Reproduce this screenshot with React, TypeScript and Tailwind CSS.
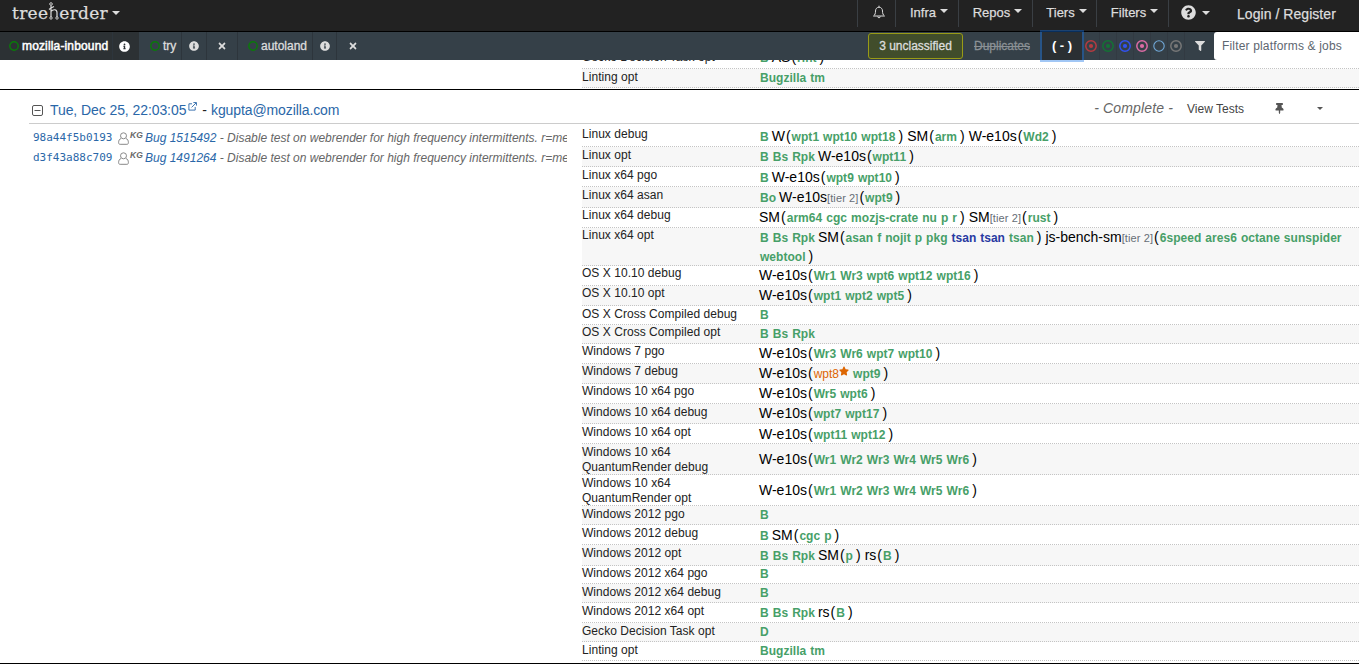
import { FaInfoCircle, FaTimes, FaFilter, FaQuestionCircle, FaThumbtack, FaStar } from "react-icons/fa";

type Group = { name: string; tier?: boolean; jobs: string[] };
type Item = string | Group;
type Row = { platform: string; height: string; top?: string; jobsTop?: string; jobs: Item[] };

const g = (name: string, jobs: string, tier = false): Group => ({ name, tier, jobs: jobs.split(" ") });

const rows: Row[] = [
  { platform: "Linux debug", height: "h-[23px]", top: "pt-[3px]", jobsTop: "pt-[3px]", jobs: ["B", g("W", "wpt1 wpt10 wpt18"), g("SM", "arm"), g("W-e10s", "Wd2")] },
  { platform: "Linux opt", height: "h-[20px]", top: "pt-px", jobs: ["B", "Bs", "Rpk", g("W-e10s", "wpt11")] },
  { platform: "Linux x64 pgo", height: "h-[20px]", top: "pt-px", jobsTop: "pt-px", jobs: ["B", g("W-e10s", "wpt9 wpt10")] },
  { platform: "Linux x64 asan", height: "h-[21px]", top: "pt-px", jobsTop: "pt-px", jobs: ["Bo", g("W-e10s", "wpt9", true)] },
  { platform: "Linux x64 debug", height: "h-[20px]", jobs: [g("SM", "arm64 cgc mozjs-crate nu p r"), g("SM", "rust", true)] },
  { platform: "Linux x64 opt", height: "h-[38px]", jobs: ["B", "Bs", "Rpk", g("SM", "asan f nojit p pkg *tsan *tsan tsan"), g("js-bench-sm", "6speed ares6 octane sunspider webtool", true)] },
  { platform: "OS X 10.10 debug", height: "h-[20px]", jobs: [g("W-e10s", "Wr1 Wr3 wpt6 wpt12 wpt16")] },
  { platform: "OS X 10.10 opt", height: "h-[20px]", jobs: [g("W-e10s", "wpt1 wpt2 wpt5")] },
  { platform: "OS X Cross Compiled debug", height: "h-[19px]", top: "pt-px", jobsTop: "-mt-px", jobs: ["B"] },
  { platform: "OS X Cross Compiled opt", height: "h-[19px]", jobsTop: "-mt-px", jobs: ["B", "Bs", "Rpk"] },
  { platform: "Windows 7 pgo", height: "h-[20px]", jobs: [g("W-e10s", "Wr3 Wr6 wpt7 wpt10")] },
  { platform: "Windows 7 debug", height: "h-[20px]", jobs: [g("W-e10s", "!wpt8 wpt9")] },
  { platform: "Windows 10 x64 pgo", height: "h-[20px]", jobs: [g("W-e10s", "Wr5 wpt6")] },
  { platform: "Windows 10 x64 debug", height: "h-[20px]", top: "pt-px", jobs: [g("W-e10s", "wpt7 wpt17")] },
  { platform: "Windows 10 x64 opt", height: "h-[20px]", top: "pt-px", jobsTop: "pt-px", jobs: [g("W-e10s", "wpt11 wpt12")] },
  { platform: "Windows 10 x64 QuantumRender debug", height: "h-[31px]", top: "pt-px", jobsTop: "pt-[6px]", jobs: [g("W-e10s", "Wr1 Wr2 Wr3 Wr4 Wr5 Wr6")] },
  { platform: "Windows 10 x64 QuantumRender opt", height: "h-[31px]", top: "pt-px", jobsTop: "pt-[6px]", jobs: [g("W-e10s", "Wr1 Wr2 Wr3 Wr4 Wr5 Wr6")] },
  { platform: "Windows 2012 pgo", height: "h-[19px]", top: "pt-px", jobsTop: "-mt-px", jobs: ["B"] },
  { platform: "Windows 2012 debug", height: "h-[20px]", top: "pt-px", jobsTop: "pt-px", jobs: ["B", g("SM", "cgc p")] },
  { platform: "Windows 2012 opt", height: "h-[21px]", top: "pt-px", jobsTop: "pt-px", jobs: ["B", "Bs", "Rpk", g("SM", "p"), g("rs", "B")] },
  { platform: "Windows 2012 x64 pgo", height: "h-[18px]", jobsTop: "-mt-[2px]", jobs: ["B"] },
  { platform: "Windows 2012 x64 debug", height: "h-[19px]", top: "pt-px", jobsTop: "-mt-px", jobs: ["B"] },
  { platform: "Windows 2012 x64 opt", height: "h-[20px]", top: "pt-px", jobs: ["B", "Bs", "Rpk", g("rs", "B")] },
  { platform: "Gecko Decision Task opt", height: "h-[19px]", top: "pt-px", jobsTop: "-mt-px", jobs: ["D"] },
  { platform: "Linting opt", height: "h-[19px]", top: "pt-px", jobsTop: "-mt-px", jobs: ["Bugzilla", "tm"] },
];

function Caret({ className = "" }: { className?: string }) {
  return (
    <svg viewBox="0 0 8 4" className={`h-1 w-2 shrink-0 ${className}`}>
      <path d="M0 0h8L4 4z" fill="currentColor" />
    </svg>
  );
}

function JobLabel({ job }: { job: string }) {
  if (job[0] === "!")
    return (
      <span className="mr-[3px] ml-px inline-block text-[12px] text-[#dd6602]">
        {job.slice(1)}
        <FaStar className="inline size-[10px] -translate-y-[4px]" />
      </span>
    );
  if (job[0] === "*") return <span className="mr-[3px] ml-px inline-block text-[12px] font-bold text-[#283aa2]">{job.slice(1)}</span>;
  return <span className="mr-[3px] ml-px inline-block text-[12px] font-bold tracking-[0.04px] text-[#479f68]">{job}</span>;
}

function PlatformRow({ row, shaded }: { row: Row; shaded: boolean }) {
  return (
    <div className={`flex shrink-0 border-b border-dotted border-[#c4c4c4] ${row.height} ${shaded ? "bg-[#f7f7f7]" : ""}`}>
      <div className={`w-[177px] shrink-0 pr-8 text-[12px] leading-[15px] tracking-[0.04px] text-[#222] ${row.top ?? ""}`}>
        <span className={row.platform.includes("Quantum") ? "" : "whitespace-nowrap"}>{row.platform}</span>
      </div>
      <div className={`min-w-0 flex-1 pr-3 text-[14px] leading-[18px] text-black ${row.jobsTop ?? ""}`}>
        {row.jobs.map((item, i) =>
          typeof item === "string" ? (
            <JobLabel key={i} job={item} />
          ) : (
            <span key={i} className="mr-[4px]">
              {item.name}
              {item.tier && <span className="text-[11px] tracking-[0.1px] text-[#666e76]">[tier 2]</span>}
              <span className="ml-px">(</span>
              {item.jobs.map((job, j) => (
                <span key={j}>
                  <JobLabel job={job} />
                  {j < item.jobs.length - 1 && <wbr />}
                </span>
              ))}
              <span>)</span>
            </span>
          ),
        )}
      </div>
    </div>
  );
}

function Ring({ className, dot = true }: { className: string; dot?: boolean }) {
  return (
    <span className="flex h-full w-[17px] items-center justify-center border-r border-[#323a42]">
      <svg viewBox="0 0 12 12" className={`size-3 shrink-0 ${className}`}>
        <circle cx="6" cy="6" r="5.2" fill="none" stroke="currentColor" strokeWidth={dot ? 1.5 : 1.1} />
        {dot && <circle cx="6" cy="6" r="2.1" fill="currentColor" />}
      </svg>
    </span>
  );
}

function Person() {
  return (
    <svg viewBox="0 0 11 13" className="h-[13px] w-[11px] shrink-0" fill="none" stroke="#888">
      <circle cx="5.5" cy="3.8" r="3" />
      <path d="M3 6.6C1.3 7 .6 8.5.6 10.700c0 1.100.6 1.600 1.500 1.600h6.800c.900 0 1.500-.500 1.500-1.600 0-2.200-.700-3.700-2.400-4.100" />
    </svg>
  );
}

function RepoName({ name, className }: { name: string; className: string }) {
  return (
    <span className={`flex h-full shrink-0 items-center border-r border-[#2d353c] text-[12px] whitespace-nowrap ${className}`}>
      <svg viewBox="0 0 10 10" className="mr-[3px] size-[10px] shrink-0">
        <circle cx="5" cy="5" r="4.2" fill="none" stroke="#0a7a0a" strokeWidth="1.4" />
      </svg>
      {name}
    </span>
  );
}

function Revision({ hash, bug }: { hash: string; bug: string }) {
  return (
    <div className="flex h-5 items-center whitespace-nowrap">
      <span className="w-[85px] shrink-0 font-['DejaVu_Sans_Mono',monospace] text-[11px] text-[#2a67a8]">{hash}</span>
      <Person />
      <b className="ml-px w-[13px] shrink-0 -translate-y-[3px] text-[8.5px] italic text-[#666]">KG</b>
      <span className="ml-[2px] shrink-0 text-[12px] italic text-[#666]">
        <span className="text-[#2a67a8]">Bug {bug}</span> - Disable test on webrender for high frequency intermittents. r=me
      </span>
    </div>
  );
}

function Logo() {
  return (
    <span className="flex items-center font-['DejaVu_Serif',serif] text-[17px] leading-[24px]">
      <span className="tracking-[0.3px]">tree</span>
      <svg viewBox="0 0 11 18" className="-mt-[5px] h-[18px] w-[11px]" fill="none" stroke="currentColor" role="img" aria-label="h">
        <path d="M3 3.500v11.500M3 9.500C5 7 9 7 9 10.500V15M1 7.500l2-1.500 3-1.500" strokeWidth="1.200" />
        <circle cx="3" cy="2" r="1.300" strokeWidth=".9" />
        <circle cx="3" cy="16" r="1.200" strokeWidth=".9" />
        <circle cx="9" cy="16" r="1.200" strokeWidth=".9" />
      </svg>
      <span className="tracking-[0.3px]">erder</span>
    </span>
  );
}

const menus = [
  { label: "Infra", width: "w-[63px]" },
  { label: "Repos", width: "w-[74px]" },
  { label: "Tiers", width: "w-[64px]" },
  { label: "Filters", width: "w-[72px]" },
];

export default function App() {
  return (
    <div className="flex h-[665px] w-[1359px] flex-col overflow-hidden bg-white font-['Liberation_Sans',Arial,sans-serif]">
      <header className="flex h-[32px] shrink-0 items-start border-b border-black bg-[#222] text-[#ddd] [-webkit-text-stroke:0.25px]">
        <div className="flex w-[857px] items-center pt-px pl-3">
          <Logo />
          <Caret className="ml-1" />
        </div>
        <div className="flex h-[27px] w-[39px] items-center justify-center border-x border-[#3a3f44] pl-[4px]">
          <svg viewBox="0 0 14 14" className="mt-[-3px] size-[14px]" fill="none" stroke="currentColor">
            <path d="M1.500 11c1.500-1 2-2.700 2-5 0-2.200 1.500-3.800 3.500-3.800s3.500 1.600 3.500 3.800c0 2.300.500 4 2 5zM7 2.200V.7M5.700 11.500c0 1.700 2.600 1.700 2.600 0" />
          </svg>
        </div>
        {menus.map((m) => (
          <div key={m.label} className={`flex h-[27px] items-center justify-center border-r border-[#3a3f44] pb-[2px] pl-[4px] text-[13px] ${m.width}`}>
            {m.label}
            <Caret className="mt-[-3px] ml-1" />
          </div>
        ))}
        <div className="flex h-[25px] w-[57px] items-center pl-3">
          <FaQuestionCircle className="size-[15px]" />
          <Caret className="ml-[6px]" />
        </div>
        <span className="pt-[5px] pl-[11px] text-[14px] leading-[18px] tracking-[0.05px]">Login / Register</span>
      </header>

      <nav className="relative z-10 flex h-[28px] shrink-0 items-center bg-[#354048] text-[#ddd]">
        <RepoName name="mozilla-inbound" className="w-[113px] bg-[#2c3134] pl-[9px] tracking-[0.15px] text-white [-webkit-text-stroke:0.5px]" />
        <span className="flex h-full w-[26px] items-center bg-[#2c3134] pl-[6px] text-white"><FaInfoCircle className="size-[11px]" /></span>
        <RepoName name="try" className="w-[43px] pl-[11px] [-webkit-text-stroke:0.3px]" />
        <span className="flex h-full w-[25px] items-center justify-center border-r border-[#2d353c]"><FaInfoCircle className="size-[10px]" /></span>
        <span className="flex h-full w-[31px] items-center justify-center border-r border-[#2d353c]"><FaTimes className="size-[10px]" /></span>
        <RepoName name="autoland" className="w-[75px] pl-[10px] [-webkit-text-stroke:0.3px]" />
        <span className="flex h-full w-[24px] items-center justify-center border-r border-[#2d353c]"><FaInfoCircle className="size-[10px]" /></span>
        <span className="flex w-[31px] justify-center"><FaTimes className="size-[10px]" /></span>
        <span className="ml-[500px] flex h-[26px] w-[95px] items-center justify-center rounded-[3px] border border-[#999b16] bg-[#414d2b] text-[12px] [-webkit-text-stroke:0.3px]">3 unclassified</span>
        <span className="ml-[11px] w-[57px] text-[12px] whitespace-nowrap text-[#8a9095] line-through [-webkit-text-stroke:0.3px]">Duplicates</span>
        <span className="ml-[11px] flex h-[28px] w-[40px] items-center justify-center bg-[#2a2f33] text-[13px] font-bold text-white outline-2 outline-[rgba(20,115,230,0.4)]">( - )</span>
        <div className="ml-px flex h-full">
          <Ring className="text-[#b63a40]" />
          <Ring className="text-[#137334]" />
          <Ring className="text-[#3152f2]" />
          <Ring className="text-[#dc6ba5]" />
          <Ring className="text-[#71a8d8]" dot={false} />
          <Ring className="text-[#777]" />
        </div>
        <span className="flex w-[29px] justify-center"><FaFilter className="size-[10px]" /></span>
        <span className="flex h-[28px] flex-1 items-center rounded-l-[3px] bg-white pl-[8px] text-[12px] tracking-[0.17px] text-[#5d6670]">Filter platforms &amp; jobs</span>
      </nav>

      <section className="flex h-[30px] shrink-0 flex-col justify-end overflow-hidden border-b border-black pb-px pl-[582px]">
        <PlatformRow row={{ platform: "Gecko Decision Task opt", height: "h-[20px]", top: "pt-px", jobsTop: "-mt-px", jobs: ["B", g("AS", "rlnt")] }} shaded={false} />
        <PlatformRow row={{ platform: "Linting opt", height: "h-[19px]", top: "pt-px", jobsTop: "-mt-px", jobs: ["Bugzilla", "tm"] }} shaded />
      </section>

      <div className="ml-[29px] flex h-[34px] shrink-0 items-center border-b border-[#ccc] pt-[7px] text-[14px] text-[#222]">
        <svg viewBox="0 0 11 11" className="ml-[3px] size-[11px]" fill="none" stroke="#555"><rect x=".5" y=".5" width="10" height="10" rx="1.5" /><path d="M2.500 5.500h6" /></svg>
        <span className="ml-[7px] tracking-[-0.08px] text-[#2a67a8]">Tue, Dec 25, 22:03:05</span>
        <svg viewBox="0 0 10 10" className="ml-[2px] size-[9px] -translate-y-1 text-[#2a67a8]" fill="none" stroke="currentColor">
          <path d="M4.500 2H1v7h7V5.500M4 6l5-5M6 .6h3.400V4" />
        </svg>
        <span className="mr-[4px] ml-[5px]">-</span>
        <span className="tracking-[-0.1px] text-[#2a67a8]">kgupta@mozilla.com</span>
        <div className="ml-auto flex items-center pb-[3px]">
          <span className="text-[14px] tracking-[0.15px] italic text-[#666]">- Complete -</span>
          <span className="ml-[14px] text-[12px] text-[#444]">View Tests</span>
          <FaThumbtack className="ml-[30px] size-[11px] text-[#555]" />
          <svg viewBox="0 0 6 3" className="mr-[36px] ml-[32px] h-[3px] w-[6px] text-[#555]"><path d="M0 0h6L3 3z" fill="currentColor" /></svg>
        </div>
      </div>

      <main className="flex h-[540px] shrink-0 border-b border-black">
        <div className="w-[567px] shrink-0 overflow-hidden pt-[4px] pl-[33px]">
          <Revision hash="98a44f5b0193" bug="1515492" />
          <Revision hash="d3f43a88c709" bug="1491264" />
        </div>
        <div className="ml-[15px] flex min-w-0 flex-1 flex-col">
          {rows.map((row, i) => (
            <PlatformRow key={i} row={row} shaded={i % 2 === 1} />
          ))}
        </div>
      </main>
    </div>
  );
}
